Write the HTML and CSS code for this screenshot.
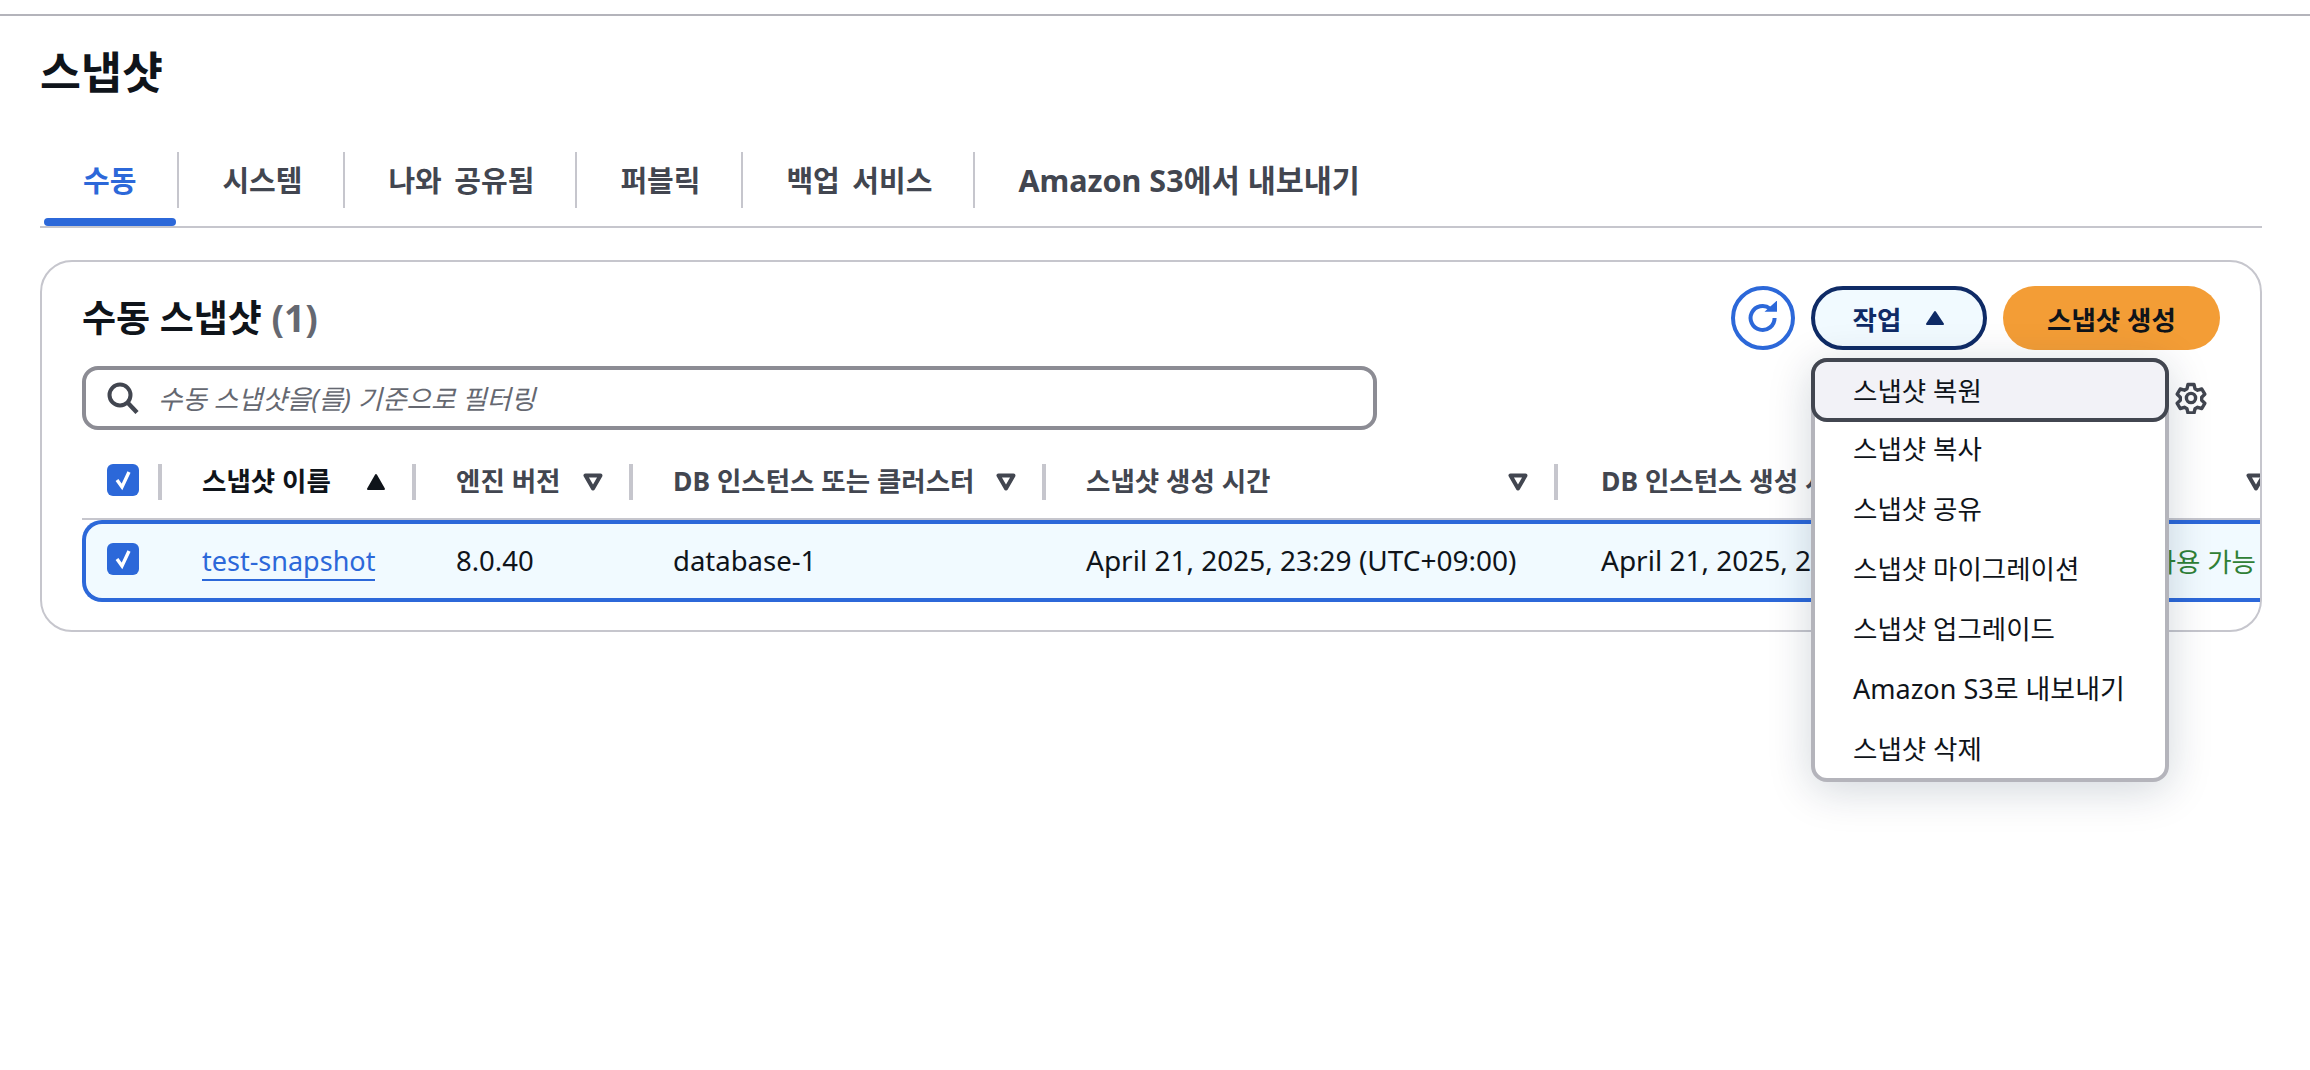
FILE: index.html
```html
<!DOCTYPE html>
<html lang="ko">
<head>
    <meta charset="UTF-8">
    <title>스냅샷</title>
    <link rel="stylesheet" href="styles.css">
</head>
<body>
    <div class="top-line"></div>
    <div class="page">
        <h1 class="page-title">스냅샷</h1>

        <div class="tabs">
            <a class="tab active">수동</a>
            <a class="tab">시스템</a>
            <a class="tab">나와 공유됨</a>
            <a class="tab">퍼블릭</a>
            <a class="tab">백업 서비스</a>
            <a class="tab last">Amazon S3에서 내보내기</a>
        </div>

        <div class="card">
            <div class="card-header">
                <h2 class="card-title">수동 스냅샷 <span class="count">(1)</span></h2>
                <div class="actions">
                    <button class="btn-refresh" aria-label="새로 고침">
                        <svg width="34" height="34" viewBox="0 0 34 34" fill="none">
                            <path d="M28.6 17a12 12 0 1 1-4.400-9.300" stroke="#2c68d9" stroke-width="4"/>
                            <path d="M18.500 10.800h12.500V-.500z" fill="#2c68d9"/>
                        </svg>
                    </button>
                    <div class="dropdown">
                        <button class="btn-actions">작업
                            <svg class="caret" width="20" height="16" viewBox="0 0 20 16"><path d="M10 2 18 14H2z" fill="#0f2b66" stroke="#0f2b66" stroke-width="2" stroke-linejoin="round"/></svg>
                        </button>
                        <ul class="menu">
                            <li class="menu-item focused">스냅샷 복원</li>
                            <li class="menu-item">스냅샷 복사</li>
                            <li class="menu-item">스냅샷 공유</li>
                            <li class="menu-item">스냅샷 마이그레이션</li>
                            <li class="menu-item">스냅샷 업그레이드</li>
                            <li class="menu-item latin">Amazon S3로 내보내기</li>
                            <li class="menu-item">스냅샷 삭제</li>
                        </ul>
                    </div>
                    <button class="btn-primary">스냅샷 생성</button>
                </div>
            </div>

            <div class="filter-row">
                <div class="search">
                    <svg width="32" height="32" viewBox="0 0 32 32" fill="none">
                        <circle cx="13" cy="13" r="10.500" stroke="#424650" stroke-width="4"/>
                        <path d="M20.500 20.500l9.500 10" stroke="#424650" stroke-width="4.400"/>
                    </svg>
                    <span class="placeholder">수동 스냅샷을(를) 기준으로 필터링</span>
                </div>
                <svg class="gear" width="32" height="32" viewBox="0 0 32 32" fill="none" stroke="#424650" stroke-width="3.400" stroke-linejoin="round">
                    <path d="M13 2.500h6l1 4.200 2.600 1.500 4.200-1.200 3 5.200-3.100 3v3.100l3.100 3-3 5.200-4.200-1.200-2.600 1.500-1 4.200h-6l-1-4.200-2.600-1.500-4.200 1.200-3-5.200 3.100-3v-3.100l-3.100-3 3-5.200 4.200 1.200L12 6.700z"/>
                    <circle cx="16" cy="16" r="4.600"/>
                </svg>
            </div>

            <div class="table">
                <div class="thead">
                    <div class="th th-check"><span class="checkbox"><svg width="18" height="22" viewBox="0 0 18 22"><path d="M3 11l5 7 7-15" fill="none" stroke="#fff" stroke-width="3.400"/></svg></span></div>
                    <div class="th sorted"><span>스냅샷 이름</span><svg class="sort" width="20" height="18" viewBox="0 0 20 18"><path d="M10 2 18 16H2z" fill="#0f141a" stroke="#0f141a" stroke-width="2" stroke-linejoin="round"/></svg></div>
                    <div class="th"><span>엔진 버전</span><svg class="sort" width="20" height="18" viewBox="0 0 20 18"><path d="M2.500 2.500h15L10 15.500z" fill="none" stroke="#424650" stroke-width="4" stroke-linejoin="round"/></svg></div>
                    <div class="th"><span>DB 인스턴스 또는 클러스터</span><svg class="sort" width="20" height="18" viewBox="0 0 20 18"><path d="M2.500 2.500h15L10 15.500z" fill="none" stroke="#424650" stroke-width="4" stroke-linejoin="round"/></svg></div>
                    <div class="th"><span>스냅샷 생성 시간</span><svg class="sort" width="20" height="18" viewBox="0 0 20 18"><path d="M2.500 2.500h15L10 15.500z" fill="none" stroke="#424650" stroke-width="4" stroke-linejoin="round"/></svg></div>
                    <div class="th th-last"><span>DB 인스턴스 생성 시간</span><svg class="sort" width="20" height="18" viewBox="0 0 20 18"><path d="M2.500 2.500h15L10 15.500z" fill="none" stroke="#424650" stroke-width="4" stroke-linejoin="round"/></svg></div>
                </div>
                <div class="row selected">
                    <div class="td td-check"><span class="checkbox"><svg width="18" height="22" viewBox="0 0 18 22"><path d="M3 11l5 7 7-15" fill="none" stroke="#fff" stroke-width="3.400"/></svg></span></div>
                    <div class="td"><a class="link">test-snapshot</a></div>
                    <div class="td">8.0.40</div>
                    <div class="td">database-1</div>
                    <div class="td date">April 21, 2025, 23:29 (UTC+09:00)</div>
                    <div class="td td-last"><span class="date">April 21, 2025, 2</span><span class="status">사용 가능</span></div>
                </div>
            </div>
        </div>
    </div>
</body>
</html>
```

FILE: styles.css
```css
* {
    box-sizing: border-box;
}

body {
    margin: 0;
    padding: 0;
    min-height: 100vh;
    background: white;
    color: #0f141a;
    font-family: "Noto Sans", "Noto Sans CJK KR", sans-serif;
    font-size: 26.5px;
}

.top-line {
    height: 2px;
    margin-top: 14px;
    background-color: #b4b4bb;
}

.page {
    padding: 0 48px 0 40px;
}

.page-title {
    margin: 0;
    height: 136px;
    padding-top: 26px;
    font-size: 44.5px;
    line-height: 60px;
    font-weight: 700;
}

.tabs {
    display: flex;
    height: 76px;
    border-bottom: 2px solid #c6c6cd;
}

.tab {
    display: flex;
    align-items: center;
    position: relative;
    height: 56px;
    padding: 0 41px 3px 43px;
    border-right: 2px solid #c6c6cd;
    color: #424650;
    font-size: 29px;
    font-weight: 700;
    word-spacing: 5px;
}

.tab.last {
    border-right: none;
    font-size: 30.5px;
    word-spacing: 0;
}

.tab.active {
    color: #2c68d9;
}

.tab.active::after {
    content: "";
    position: absolute;
    left: 4px;
    right: 1px;
    top: 66px;
    height: 8px;
    border-radius: 4px;
    background-color: #2c68d9;
}

.card {
    margin-top: 32px;
    height: 372px;
    padding: 24px 0 0 40px;
    border: 2px solid #c6c6cd;
    border-radius: 32px;
}

.card-header {
    display: flex;
    justify-content: space-between;
    align-items: center;
    padding-right: 40px;
}

.card-title {
    margin: 0;
    padding-bottom: 4px;
    font-size: 37px;
    font-weight: 700;
}

.count {
    color: #656871;
}

.actions {
    display: flex;
    gap: 16px;
}

button {
    font-family: inherit;
    font-size: 26.5px;
    font-weight: 700;
    cursor: pointer;
}

.btn-refresh {
    display: flex;
    align-items: center;
    justify-content: center;
    width: 64px;
    height: 64px;
    padding: 0;
    background: white;
    border: 4px solid #2c68d9;
    border-radius: 50%;
}

.dropdown {
    position: relative;
}

.btn-actions {
    display: flex;
    align-items: center;
    justify-content: center;
    gap: 24px;
    width: 176px;
    height: 64px;
    color: #0f2b66;
    background-color: #f1faff;
    border: 4px solid #0f2b66;
    border-radius: 32px;
}

.btn-primary {
    width: 217px;
    height: 64px;
    border: none;
    border-radius: 32px;
    color: #0f141a;
    background-color: #f39d36;
}

.menu {
    position: absolute;
    top: 72px;
    left: 0;
    z-index: 5;
    width: 358px;
    margin: 0;
    padding: 0;
    list-style: none;
    background: white;
    border: 4px solid #b4b4bb;
    border-radius: 16px;
    box-shadow: 0 8px 44px rgba(0, 31, 60, 0.18);
}

.menu-item {
    display: flex;
    align-items: center;
    height: 60px;
    padding: 0 0 2px 38px;
    white-space: nowrap;
}

.menu-item.latin {
    font-size: 27px;
}

.menu-item.focused {
    position: relative;
    height: 64px;
    margin: -4px -4px -4px;
    background-color: #f2f2f7;
    border: 4px solid #424650;
    border-radius: 16px;
}

.filter-row {
    display: flex;
    justify-content: space-between;
    align-items: center;
    margin-top: 16px;
    padding-right: 53px;
}

.search {
    display: flex;
    align-items: center;
    gap: 19px;
    width: 1295px;
    height: 64px;
    padding-left: 21px;
    border: 4px solid #8c8c94;
    border-radius: 16px;
}

.placeholder {
    margin-bottom: 2px;
    color: #656871;
    font-style: italic;
}

.table {
    margin-top: 34px;
    overflow: hidden;
}

.thead,
.row {
    display: grid;
    grid-template-columns: 80px 254px 217px 413px 512px 760px;
    width: 2236px;
}

.thead {
    height: 56px;
    border-bottom: 2px solid #c6c6cd;
}

.th {
    display: flex;
    align-items: center;
    justify-content: space-between;
    height: 36px;
    padding: 0 26px 0 40px;
    border-right: 4px solid #c6c6cd;
    color: #424650;
    font-weight: 700;
}

.th span:not(.checkbox) {
    margin-bottom: 5px;
}

.th.sorted {
    color: #0f141a;
}

.th-check {
    align-items: flex-start;
    padding: 0 0 0 25px;
}

.th-last {
    border-right: none;
    padding-left: 43px;
    padding-right: 52px;
}

.row {
    height: 82px;
    align-items: center;
    background-color: #f1faff;
    border: 4px solid #2c68d9;
    border-right: none;
    border-radius: 20px 0 0 20px;
    font-size: 27.5px;
}

.td {
    padding-left: 36px;
    padding-bottom: 2px;
    white-space: nowrap;
}

.date {
    font-size: 28px;
}

.td-check {
    display: flex;
    padding-left: 21px;
    padding-bottom: 4px;
}

.td-last {
    display: flex;
    justify-content: space-between;
    padding-left: 39px;
    padding-right: 66px;
}

.status {
    color: #2f8035;
    font-size: 26.5px;
}

.checkbox {
    display: flex;
    align-items: center;
    justify-content: center;
    width: 32px;
    height: 32px;
    border-radius: 6px;
    background-color: #2c68d9;
}

.link {
    color: #2c68d9;
    font-size: 27px;
    border-bottom: 2px solid #2c68d9;
}
```
